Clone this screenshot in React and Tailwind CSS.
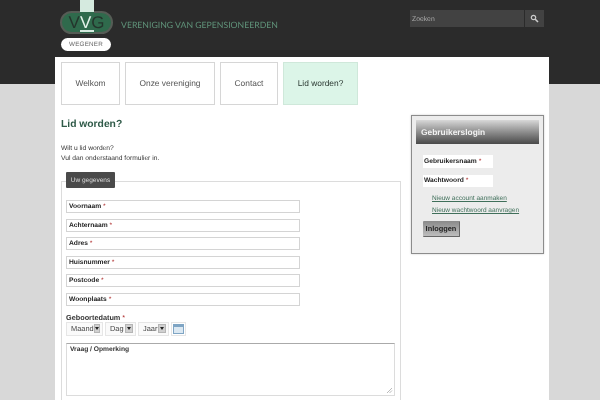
const font = { fontFamily: '"Liberation Sans", Arial, sans-serif' };

function Field({ label }) {
  return (
    <div className="w-[234px] h-[13px] border border-[#d4d4d4] bg-white pl-[2px] text-[6.7px] leading-[11px] font-bold text-[#222] mb-[5.5px]">
      {label} <span className="text-[#b03030] font-normal">*</span>
    </div>
  );
}

function Sel({ label, w }) {
  return (
    <div className="flex items-center justify-between h-[14px] border border-[#e6e6e6] bg-[#fafafa] pl-[4px] pr-[2px] text-[7.4px] text-[#444]" style={{ width: w }}>
      <span>{label}</span>
      <span className="flex items-center justify-center w-[8px] h-[9px] bg-[#d0d0d0] border border-[#b5b5b5]">
        <span className="w-0 h-0 border-l-[2px] border-r-[2px] border-t-[3px] border-l-transparent border-r-transparent border-t-[#222]" />
      </span>
    </div>
  );
}

function Tab({ label, w, active }) {
  return (
    <div className={`h-[43px] flex items-center justify-center border text-[8.4px] ${active ? "bg-[#dcf5e8] border-[#cfe8da] text-[#2c3a33]" : "bg-white border-[#d6d6d6] text-[#555]"}`} style={{ width: w }}>
      {label}
    </div>
  );
}

export default function App() {
  return (
    <div className="w-[600px] h-[400px] overflow-hidden bg-[#d8d8d8] [text-rendering:geometricPrecision] blur-[0.4px]" style={font}>
      <header className="h-[84px] bg-[#2b2b2b] flex justify-between pl-[60px] pr-[56px]">
        <div className="flex items-start">
          <div className="relative w-[53px] h-[52px]">
            <svg width="53" height="34" viewBox="0 0 53 34" className="absolute left-0 top-0">
              <rect x="1" y="12" width="51" height="21" rx="10.5" fill="#2f6a4c" stroke="#555c55" strokeWidth="2" />
              <rect x="20" y="0" width="14" height="12" fill="#d5eadf" />
              <rect x="20" y="12" width="14" height="21" fill="#2f6a4c" />
              <rect x="20" y="30" width="14" height="2" fill="#d5eadf" />
            </svg>
            <div className="absolute left-0 top-[13px] w-[53px] text-center text-[17px] leading-[20px] text-[#24352c]">
              V<span className="text-[#e4f2ea]">V</span>G
            </div>
            <div className="absolute left-[1px] top-[38px] w-[50px] h-[13px] rounded-full bg-white flex items-center justify-center text-[6.3px] tracking-[0.2px] text-[#666]">
              WEGENER
            </div>
          </div>
          <div className="ml-[8px] mt-[19px] text-[8.7px] leading-[12px] text-[#5f9279] whitespace-nowrap" style={{ fontFamily: 'Lato, sans-serif' }}>
            VERENIGING VAN GEPENSIONEERDEN
          </div>
        </div>
        <div className="flex mt-[10px] h-[17px] gap-[1px]">
          <div className="w-[114px] bg-[#424242] pl-[2px] text-[6.8px] leading-[19px] text-[#aaa]">Zoeken</div>
          <div className="w-[19px] bg-[#424242] flex items-center justify-center">
            <svg width="9" height="9" viewBox="0 0 9 9" fill="none" stroke="#ccc">
              <circle cx="3.5" cy="3.5" r="2.2" strokeWidth="1.2" />
              <path d="M5 5 L8 8" strokeWidth="1.6" />
            </svg>
          </div>
        </div>
      </header>

      <main className="relative w-[494px] h-[343px] ml-[55px] -mt-[27px] bg-white pl-[6px] pt-[5px]">
        <nav className="flex gap-[5px]">
          <Tab label="Welkom" w={59} />
          <Tab label="Onze vereniging" w={90} />
          <Tab label="Contact" w={58} />
          <Tab label="Lid worden?" w={75} active />
        </nav>

        <div className="flex">
          <section className="w-[340px]">
            <h1 className="mt-[13px] text-[10.3px] leading-[14px] font-bold text-[#2f5a48]">Lid worden?</h1>
            <p className="mt-[12px] text-[6.7px] leading-[10px] text-[#333]">
              Wilt u lid worden?<br />Vul dan onderstaand formulier in.
            </p>
            <div className="relative mt-[17px] h-[240px] border-t border-l border-r border-[#dcdcdc] pl-[4px] pt-[18px]">
              <div className="absolute left-[4px] -top-[10px] w-[49px] h-[16px] rounded-[1px] bg-[#4a4a4a] text-center text-[6.5px] leading-[18px] text-[#ddd]">
                Uw gegevens
              </div>
              <Field label="Voornaam" />
              <Field label="Achternaam" />
              <Field label="Adres" />
              <Field label="Huisnummer" />
              <Field label="Postcode" />
              <Field label="Woonplaats" />
              <div className="mt-[7px] text-[7.3px] leading-[9px] font-bold text-[#333]">
                Geboortedatum <span className="text-[#b03030] font-normal">*</span>
              </div>
              <div className="flex gap-[2px] items-center">
                <Sel label="Maand" w={37} />
                <Sel label="Dag" w={31} />
                <Sel label="Jaar" w={31} />
                <div className="w-[15px] h-[14px] border border-[#e6e6e6] flex items-center justify-center">
                  <svg width="11" height="10" viewBox="0 0 11 10">
                    <rect x="0.5" y="0.5" width="10" height="9" fill="#dbe8f2" stroke="#7fa5c4" />
                    <rect x="0.5" y="0.5" width="10" height="2.5" fill="#7fa5c4" />
                  </svg>
                </div>
              </div>
              <div className="relative mt-[7px] w-[329px] h-[53px] border border-[#dcdcdc] border-t-[#aaa] pl-[3px] pt-[1px] text-[6.7px] leading-[10px] font-bold text-[#333]">
                Vraag / Opmerking
                <svg width="7" height="7" viewBox="0 0 7 7" stroke="#bbb" className="absolute right-[1px] bottom-[1px]">
                  <path d="M1 6 L6 1 M3.5 6 L6 3.5" />
                </svg>
              </div>
            </div>
          </section>

          <aside className="ml-[10px] mt-[10px] w-[133px] h-[139px] border border-[#8c8c8c] bg-[#ececec] p-[4px] shadow-[0_0_2px_#ccc]">
            <div className="h-[24px] bg-gradient-to-b from-[#d8d8d8] to-[#4a4a4a] pl-[5px] text-[8.4px] leading-[24px] font-bold text-[#f2f2f2]">
              Gebruikerslogin
            </div>
            <div className="pl-[7px] pt-[11px]">
              <div className="w-[70px] h-[13px] bg-white pl-[1px] text-[6.7px] leading-[13px] font-bold text-[#222]">
                Gebruikersnaam <span className="text-[#b03030] font-normal">*</span>
              </div>
              <div className="mt-[7px] w-[70px] h-[12px] bg-white pl-[1px] text-[6.7px] leading-[12px] font-bold text-[#222]">
                Wachtwoord <span className="text-[#b03030] font-normal">*</span>
              </div>
              <div className="mt-[6px] pl-[9px] text-[6.5px] leading-[12px] text-[#3f6f5a] underline">
                <div>Nieuw account aanmaken</div>
                <div>Nieuw wachtwoord aanvragen</div>
              </div>
              <div className="mt-[4px] w-[37px] h-[16px] rounded-[1px] bg-gradient-to-b from-[#8a8a8a] to-[#bdbdbd] border-r border-b border-[#666] text-center text-[7.4px] leading-[15px] font-bold text-[#222]">
                Inloggen
              </div>
            </div>
          </aside>
        </div>
      </main>
    </div>
  );
}
